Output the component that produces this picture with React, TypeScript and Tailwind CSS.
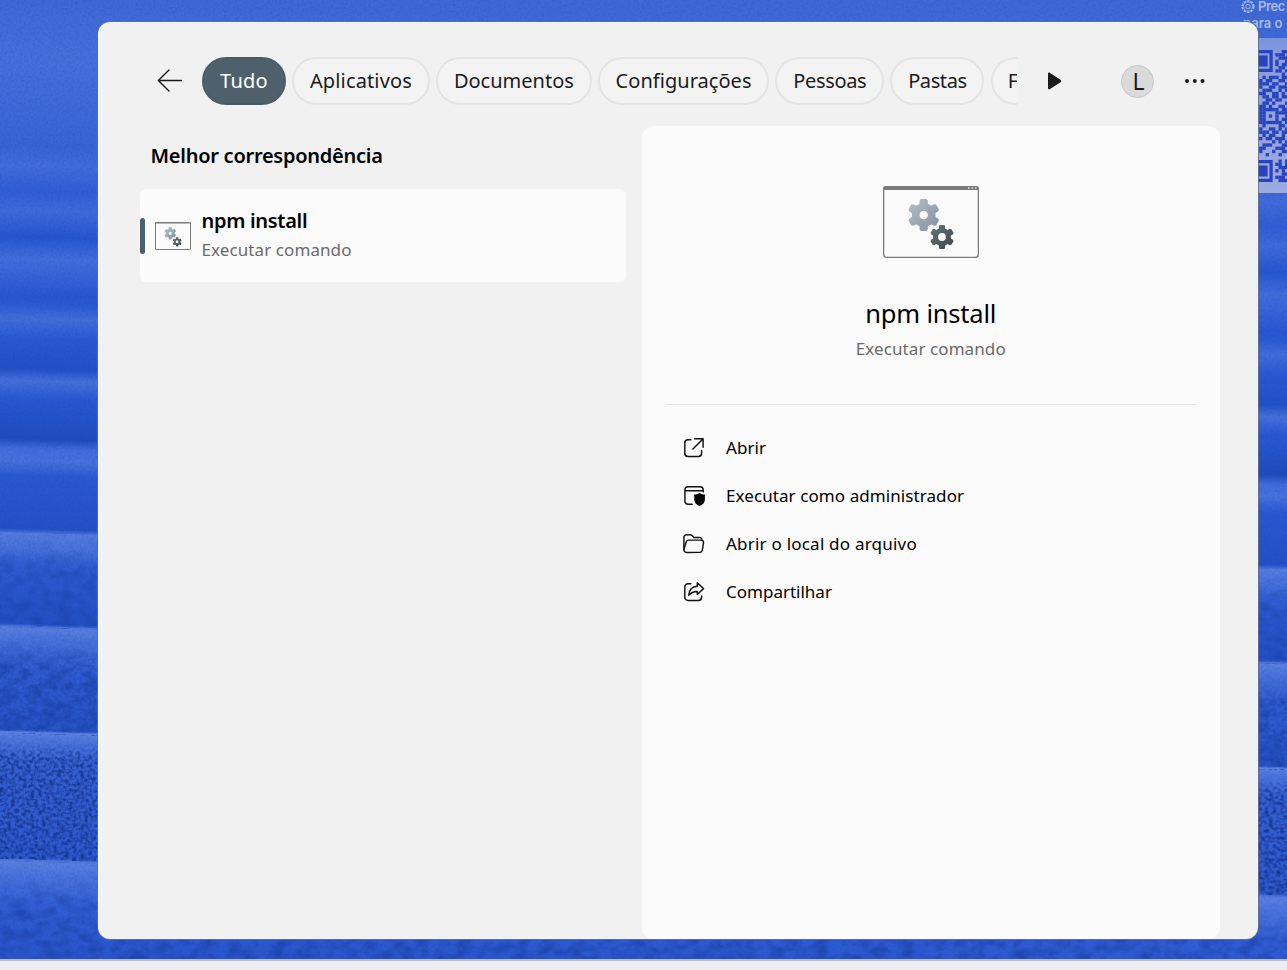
import React from "react";

const TABS = [
  { label: "Aplicativos", box: "w-[137.5px]", text: "tracking-[0.14px]" },
  { label: "Documentos", box: "w-[156px]", text: "" },
  { label: "Configurações", box: "w-[171px]", text: "tracking-[0.04px]" },
  { label: "Pessoas", box: "w-[109px]", text: "tracking-[-0.35px]" },
  { label: "Pastas", box: "w-[94px]", text: "tracking-[-0.4px]" },
];

function gearPath(cx: number, cy: number, r: number) {
  const shape: [number, number][] = [
    [-20, 0.74],
    [-16, 0.93],
    [-10, 1],
    [10, 1],
    [16, 0.93],
    [20, 0.74],
  ];
  const pts: string[] = [];
  for (let i = 0; i < 6; i++) {
    for (const [a, k] of shape) {
      const t = ((i * 60 - 90 + a) * Math.PI) / 180;
      pts.push(`${(cx + Math.cos(t) * r * k).toFixed(2)} ${(cy + Math.sin(t) * r * k).toFixed(2)}`);
    }
  }
  const h = r > 14 ? 4.2 : 3.9;
  return `M${pts.join("L")}Z M${cx - h} ${cy}a${h} ${h} 0 1 0 ${h * 2} 0a${h} ${h} 0 1 0 ${-h * 2} 0Z`;
}

function CommandIcon({ id, className, line }: { id: string; className: string; line: number }) {
  return (
    <svg viewBox="0 0 96 72" preserveAspectRatio="none" className={className}>
      <defs>
        <linearGradient id={`${id}-a`} x1="0" y1="0" x2="1" y2="1">
          <stop offset="0" stopColor="#b3bfca" />
          <stop offset="1" stopColor="#84909c" />
        </linearGradient>
        <linearGradient id={`${id}-b`} x1="0" y1="0" x2="1" y2="1">
          <stop offset="0" stopColor="#69777b" />
          <stop offset="1" stopColor="#3b4447" />
        </linearGradient>
      </defs>
      <rect x={line / 2} y={line / 2} width={96 - line} height={72 - line} rx="3" fill="#fbfbfb" stroke="#7a7a78" strokeWidth={line} />
      <path d="M0 4V3a3 3 0 0 1 3-3h90a3 3 0 0 1 3 3v1z" fill="#7a7a78" />
      <path d="M85 2h1.4M88.5 2h1.4M92 2h1.4" stroke="#e4e4e4" strokeWidth="1.4" />
      <path d={gearPath(40.7, 29, 16.2)} fill={`url(#${id}-a)`} fillRule="evenodd" />
      <path d={gearPath(59, 51, 12.2)} fill={`url(#${id}-b)`} fillRule="evenodd" />
    </svg>
  );
}

function Glyph({ children }: { children: React.ReactNode }) {
  return (
    <svg viewBox="0.6 0 24 24" className="size-6 shrink-0" fill="none" stroke="#111" strokeWidth="1.45" strokeLinecap="round" strokeLinejoin="round">
      {children}
    </svg>
  );
}

const ACTIONS = [
  {
    label: "Abrir",
    text: "tracking-[0.05px]",
    icon: (
      <Glyph>
        <path d="M8.5 3.8H5.6a3.2 3.2 0 0 0-3.2 3.2v10.3a3.2 3.2 0 0 0 3.2 3.2h10.4a3.2 3.2 0 0 0 3.2-3.2V14.5" />
        <path d="M12.3 2.8h8.4v8.4M20.5 3 10.5 13" />
      </Glyph>
    ),
  },
  {
    label: "Executar como administrador",
    text: "tracking-[0.08px]",
    icon: (
      <Glyph>
        <path d="M9.8 20.3H5.7a3.2 3.2 0 0 1-3.2-3.2V6a3.2 3.2 0 0 1 3.2-3.2h12A3.2 3.2 0 0 1 20.8 6v2M3 6.8h17.5" />
        <path d="M17.1 8.7c1.3 1.1 3 1.8 5.4 1.9v4.6c0 3.2-2 5.6-5.4 6.8-3.3-1.2-5.3-3.6-5.3-6.8v-4.6c2.3-.1 4-.8 5.3-1.9Z" fill="#000" stroke="none" />
      </Glyph>
    ),
  },
  {
    label: "Abrir o local do arquivo",
    text: "tracking-[0.22px]",
    icon: (
      <Glyph>
        <path d="M1.5 17V5.4a2.7 2.7 0 0 1 2.7-2.7h3.4c.8 0 1.5.3 2 .8l1.9 1.9h5.6a2.5 2.5 0 0 1 2.5 2.7" />
        <path d="M1.5 17.5 3.8 10a2.6 2.6 0 0 1 2.5-1.9h12.6a2.3 2.3 0 0 1 2.2 2.8l-1.2 7.5a2.6 2.6 0 0 1-2.5 2H4.1A2.6 2.6 0 0 1 1.5 17.5Z" />
      </Glyph>
    ),
  },
  {
    label: "Compartilhar",
    text: "",
    icon: (
      <Glyph>
        <path d="M8.5 3.8H5.6A3.2 3.2 0 0 0 2.4 7v10.3a3.2 3.2 0 0 0 3.2 3.2h10.4a3.2 3.2 0 0 0 3.2-3.2V16" />
        <path d="M14.9 2.8v3.4c-5 .3-8.2 3.4-8.6 9.1 2.2-2.7 4.9-3.9 8.6-3.9v3.1l6.2-5.9Z" />
      </Glyph>
    ),
  },
];

const CODE = [
  "000000011", "000001110", "000000111", "000001001", "000001011", "000000110", "000001101",
  "000000010", "010111011", "101100110", "111011001", "100110111", "011100101", "110011010",
  "011011011", "001101100", "011010001", "110100110", "111111011", "110001111", "110101001",
  "110001011", "111111101", "010000110", "100110101", "111011011", "010110010", "101101110",
  "000010101", "011100011", "110001110", "100010011", "001000100", "000000000", "000000101",
  "000001101", "000000111", "000001010", "000000011", "000001110", "000000111",
];

function Wallpaper() {
  const cell = 3.22;
  return (
    <svg width="1287" height="970" viewBox="0 0 1287 970" className="absolute top-0 left-0">
      <defs>
        <linearGradient id="dunes" gradientUnits="userSpaceOnUse" x1="0" y1="0" x2="0" y2="1000">
          <stop offset="0" stopColor="#3f69d6" />
          <stop offset=".06" stopColor="#4670da" />
          <stop offset=".13" stopColor="#3b66d8" />
          <stop offset=".145" stopColor="#3863d5" />
          <stop offset=".165" stopColor="#426cdb" />
          <stop offset=".19" stopColor="#305dd3" />
          <stop offset=".21" stopColor="#3f6adb" />
          <stop offset=".236" stopColor="#2655cf" />
          <stop offset=".258" stopColor="#426ddb" />
          <stop offset=".272" stopColor="#3965d9" />
          <stop offset=".295" stopColor="#2856d0" />
          <stop offset=".303" stopColor="#2b59d1" />
          <stop offset=".318" stopColor="#426ddb" />
          <stop offset=".338" stopColor="#2958d2" />
          <stop offset=".368" stopColor="#2251c6" />
          <stop offset=".38" stopColor="#466fdb" />
          <stop offset=".398" stopColor="#2858d1" />
          <stop offset=".438" stopColor="#204bbd" />
          <stop offset=".448" stopColor="#426cda" />
          <stop offset=".46" stopColor="#4872dc" />
          <stop offset=".475" stopColor="#2a58d0" />
          <stop offset=".528" stopColor="#2450c5" />
          <stop offset=".532" stopColor="#4770dc" />
          <stop offset=".543" stopColor="#5079dc" />
          <stop offset=".56" stopColor="#2e5cd2" />
          <stop offset=".623" stopColor="#244fc4" />
          <stop offset=".627" stopColor="#5a80df" />
          <stop offset=".64" stopColor="#426cda" />
          <stop offset=".67" stopColor="#315ed4" />
          <stop offset=".729" stopColor="#2955c9" />
          <stop offset=".732" stopColor="#6083df" />
          <stop offset=".742" stopColor="#5077dc" />
          <stop offset=".76" stopColor="#3862d2" />
          <stop offset=".857" stopColor="#2f5ace" />
          <stop offset=".861" stopColor="#5f82df" />
          <stop offset=".875" stopColor="#4c74dc" />
          <stop offset=".9" stopColor="#315ed4" />
          <stop offset="1" stopColor="#244fc4" />
        </linearGradient>
        <linearGradient id="crest" x1="0" y1="0" x2="0" y2="1">
          <stop offset="0" stopColor="#5a7fdf" />
          <stop offset=".35" stopColor="#4b73dc" stopOpacity=".85" />
          <stop offset="1" stopColor="#3a66d8" stopOpacity="0" />
        </linearGradient>
        <filter id="fine" x="0" y="0" width="1" height="1" colorInterpolationFilters="sRGB">
          <feTurbulence type="fractalNoise" baseFrequency=".45" numOctaves="2" />
          <feColorMatrix values="0 0 0 0 .08  0 0 0 0 .25  0 0 0 0 .66  1.2 0 0 0 -.5" />
        </filter>
        <filter id="soft" x="0" y="0" width="1" height="1" colorInterpolationFilters="sRGB">
          <feTurbulence type="fractalNoise" baseFrequency=".07 .1" numOctaves="3" />
          <feColorMatrix values="0 0 0 0 .08  0 0 0 0 .22  0 0 0 0 .6  2.4 0 0 0 -.9" />
        </filter>
        <filter id="grit" x="0" y="0" width="1" height="1" colorInterpolationFilters="sRGB">
          <feTurbulence type="fractalNoise" baseFrequency=".26 .32" numOctaves="4" seed="4" />
          <feColorMatrix values="0 0 0 0 .08  0 0 0 0 .2  0 0 0 0 .55  3 0 0 0 -1.15" />
        </filter>
        <linearGradient id="card" x1="0" y1="0" x2="0" y2="1">
          <stop offset="0" stopColor="#7893dd" />
          <stop offset=".15" stopColor="#8a9edd" />
          <stop offset="1" stopColor="#9cabe0" />
        </linearGradient>
      </defs>
      <g transform="skewY(1.65)">
        <rect x="0" y="-50" width="1287" height="1050" fill="url(#dunes)" />
        <rect x="0" y="532" width="1287" height="93" filter="url(#soft)" opacity=".35" />
        <rect x="0" y="627" width="1287" height="103" filter="url(#soft)" opacity=".5" />
        <rect x="0" y="627" width="1287" height="103" filter="url(#grit)" opacity=".25" />
        <rect x="0" y="733" width="1287" height="125" filter="url(#grit)" opacity=".85" />
        <rect x="0" y="861" width="1287" height="139" filter="url(#soft)" opacity=".5" />
        <rect x="0" y="532" width="1287" height="38" fill="url(#crest)" opacity=".8" />
        <rect x="0" y="627" width="1287" height="38" fill="url(#crest)" />
        <rect x="0" y="733" width="1287" height="26" fill="url(#crest)" />
        <rect x="0" y="861" width="1287" height="44" fill="url(#crest)" />
        <rect x="0" y="-50" width="1287" height="1050" filter="url(#fine)" opacity=".4" />
      </g>
      <rect x="1220" y="38" width="67" height="155" fill="url(#card)" />
      <g fill="#2743bd">
        {CODE.map((row, y) =>
          row.split("").map((c, x) =>
            c === "1" ? <rect key={`${y}-${x}`} x={1259.2 + x * cell} y={50 + y * cell} width={cell + 0.1} height={cell + 0.1} /> : null
          )
        )}
        <path d="M1256 50h16.7v22H1256v-3.2h13.5v-15.6H1256zM1256 160h16.7v22H1256v-3.2h13.5v-15.6H1256zM1256 55.5h11.6v11H1256zM1256 165.5h11.6v11H1256z" />
      </g>
      <g fill="none" stroke="#a6b7ea">
        <circle cx="1248" cy="6.5" r="5.7" strokeWidth="1.6" strokeDasharray="2.5 1.1" />
        <circle cx="1248" cy="6.5" r="4.6" strokeWidth=".8" />
        <circle cx="1248" cy="6.5" r="2.2" />
      </g>
    </svg>
  );
}

export default function App() {
  return (
    <div className="relative flex h-[970px] w-full flex-col overflow-hidden bg-[#2f5cd2] font-['Noto_Sans',sans-serif] text-black">
      <Wallpaper />
      <div className="absolute top-[-2px] left-[1243px] w-[44px] font-['Inter',sans-serif] text-[13px] leading-[16.5px] font-semibold whitespace-nowrap text-[#a9b9ea]">
        <p className="pl-[15px] tracking-[-0.4px]">Prec</p>
        <p>para o</p>
      </div>

      <main className="relative mt-[22px] ml-[98px] flex h-[917px] w-[1160px] flex-col rounded-[12px] bg-[#f1f1f1] shadow-[0_0_0_1px_rgba(100,110,140,0.85)]">
        <header className="flex h-[104px] shrink-0 items-center pt-[14px] pl-[59px]">
          <svg viewBox="0 0 28 28" className="size-7" fill="none" stroke="#1a1a1a" strokeWidth="1.4" strokeLinecap="round" strokeLinejoin="round">
            <path d="M12 3 1.3 13.5 12 24M1.3 13.5H24.5" />
          </svg>
          <nav className="ml-[17px] flex w-[815px] items-center gap-[6.2px] overflow-hidden text-[20px] text-[#1b1b1b]">
            <button className="h-12 w-[84px] shrink-0 rounded-full border-2 border-[#4a5c67] bg-[#4e606b] tracking-[0.28px] text-white">Tudo</button>
            {TABS.map((t) => (
              <button key={t.label} className={`h-12 shrink-0 rounded-full border-2 border-[#e4e4e4] bg-[#f3f3f3] ${t.box}`}>
                <span className={t.text}>{t.label}</span>
              </button>
            ))}
            <button className="h-12 w-[60px] shrink-0 rounded-l-full border-2 border-[#e4e4e4] bg-[#f3f3f3] pl-[15px] text-left">F</button>
          </nav>
          <svg viewBox="0 0 14 18" className="ml-[31px] h-[18px] w-[14px]" fill="#1a1a1a">
            <path d="M0 1.7C0 .7 1.2.3 2 .9l10.2 6.5c1.2.8 1.2 2.4 0 3.2L2 17.1c-.8.6-2 .2-2-.8Z" />
          </svg>
          <div className="ml-[59px] flex size-[33px] items-center justify-center rounded-full border border-[#c6c6c6] bg-[#dadada] pl-[2px] text-[23px] leading-none text-[#1a1a1a]">L</div>
          <svg viewBox="0 0 20 4" className="ml-[31px] h-1 w-5" fill="#1a1a1a">
            <circle cx="2" cy="2" r="2" />
            <circle cx="9.8" cy="2" r="2" />
            <circle cx="17.5" cy="2" r="2" />
          </svg>
        </header>

        <div className="flex min-h-0 flex-1 pl-[42px]">
          <section className="w-[486px]">
            <h2 className="mt-[16px] pl-[10.5px] text-[20px] leading-7 font-semibold tracking-[-0.26px]">Melhor correspondência</h2>
            <div className="mt-[19px] flex h-[93px] items-center rounded-[6px] bg-[#fbfbfb]">
              <div className="h-9 w-[5px] rounded-full bg-[#4a616d]" />
              <CommandIcon id="small" className="ml-[10px] h-7 w-9" line={2.7} />
              <div className="ml-[10.5px] pb-[2px]">
                <p className="text-[20px] leading-7 font-semibold tracking-[-0.3px]">npm install</p>
                <p className="mt-[3px] text-[17px] leading-6 tracking-[0.09px] text-[#6a6a6a]">Executar comando</p>
              </div>
            </div>
          </section>

          <section className="ml-[15.5px] flex w-[578.5px] flex-col rounded-[12px] bg-[#fbfbfb] px-6">
            <div className="flex h-[279px] flex-col items-center border-b border-[#e3e3e3] pt-[60px]">
              <CommandIcon id="large" className="h-[72px] w-24" line={1.3} />
              <h1 className="mt-[35px] text-[25.5px] leading-10 tracking-[-0.2px]">npm install</h1>
              <p className="mt-[4px] text-[17px] leading-6 tracking-[0.09px] text-[#6a6a6a]">Executar comando</p>
            </div>
            <ul className="mt-[19px]">
              {ACTIONS.map((a) => (
                <li key={a.label} className="flex h-12 items-center gap-[19px] pl-[17.5px]">
                  {a.icon}
                  <span className={`text-[17px] ${a.text}`}>{a.label}</span>
                </li>
              ))}
            </ul>
          </section>
        </div>
      </main>

      <div className="relative mt-5 flex-1 border-t-2 border-[#bcbec4] bg-[#eeeeee]" />
    </div>
  );
}
